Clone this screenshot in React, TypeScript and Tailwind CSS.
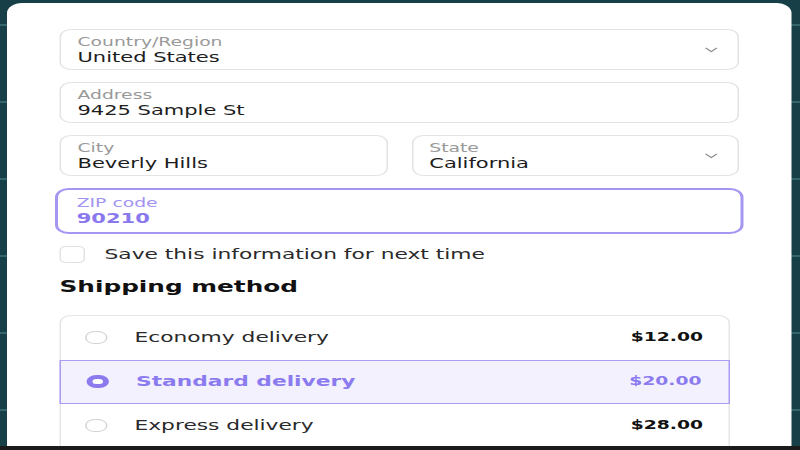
import { ReactNode } from "react";

const font = { fontFamily: '"DejaVu Sans", "Liberation Sans", sans-serif' };

function Chevron() {
    return (
        <svg width="9" height="6" viewBox="0 0 9 6" fill="none" className="shrink-0">
            <path d="M1 1.2 L4.5 4.6 L8 1.2" stroke="#8c8c8c" strokeWidth="1" strokeLinecap="round" strokeLinejoin="round" />
        </svg>
    );
}

function Field({ label, value, select }: { label: string; value: string; select?: boolean }) {
    return (
        <div className="h-[41px] rounded-[8px] border border-[#e3e3e3] pl-[11px] pr-[13px] flex items-center justify-between">
            <div className="flex flex-col">
                <span className="text-[12.5px] leading-[15px] text-[#999]">{label}</span>
                <span className="text-[14px] leading-[17px] text-[#1d1d1d]">{value}</span>
            </div>
            {select && <Chevron />}
        </div>
    );
}

function Radio({ on }: { on?: boolean }) {
    if (on) {
        return <div className="w-[15px] h-[13px] rounded-full border-[4px] border-[#8b7bef] bg-white shrink-0" />;
    }
    return <div className="w-[15px] h-[13px] rounded-full border border-[#d2d2d2] bg-white shrink-0" />;
}

function Rate({ name, price, on, children }: { name: string; price: string; on?: boolean; children?: ReactNode }) {
    return (
        <div
            className={
                on
                    ? "h-[44px] -mx-px flex items-center pl-[17px] pr-[18px] border border-[#a99df2] bg-[#f4f1ff]"
                    : "h-[44px] flex items-center pl-4 pr-[17px]"
            }
        >
            <Radio on={on} />
            <span className={on ? "ml-[18px] text-[14.5px] font-bold text-[#8b7bef]" : "ml-[18px] text-[14.5px] text-[#2a2a2a]"}>
                {name}
            </span>
            <span className={on ? "ml-auto text-[12.5px] font-bold text-[#8b7bef]" : "ml-auto text-[12.5px] font-bold text-[#111]"}>
                {price}
            </span>
            {children}
        </div>
    );
}

export default function App() {
    return (
        <div
            className="h-screen w-full flex flex-col overflow-hidden bg-[#173f47] bg-[repeating-linear-gradient(180deg,transparent_0px,transparent_24px,rgba(95,160,160,0.4)_24px,rgba(95,160,160,0.4)_26px,transparent_26px,transparent_77px)]"
            style={font}
        >
            <div className="flex-1 min-h-0 px-[7px] pt-[3px] overflow-hidden">
                {/* mobile checkout sheet, stretched to fill the landscape screen */}
                <div className="w-[523px] h-full origin-top-left scale-x-150 bg-white rounded-t-[10px] px-[35px] pt-[26px]">
                    <div className="flex flex-col gap-3">
                        <Field label="Country/Region" value="United States" select />
                        <Field label="Address" value="9425 Sample St" />
                        <div className="grid grid-cols-2 gap-4">
                            <Field label="City" value="Beverly Hills" />
                            <Field label="State" value="California" select />
                        </div>
                        <div className="-mx-[3px] h-[46px] rounded-[9px] border-2 border-[#a497f2] pl-[12.5px] flex flex-col justify-center">
                            <span className="text-[12.5px] leading-[15px] text-[#a294f0]">ZIP code</span>
                            <span className="text-[14px] leading-[17px] font-bold text-[#8a79ee]">90210</span>
                        </div>
                    </div>

                    <label className="mt-[10px] flex items-center">
                        <span className="w-[17px] h-[17px] rounded-[4px] border border-[#e3e3e3]" />
                        <span className="ml-[13px] text-[14.5px] text-[#2a2a2a]">Save this information for next time</span>
                    </label>

                    <div className="mt-[9px] text-[16.5px] font-bold text-[#111]">Shipping method</div>

                    <div className="mt-[15px] mr-[6px] rounded-t-[8px] border border-[#e6e6e6]">
                        <Rate name="Economy delivery" price="$12.00" />
                        <Rate name="Standard delivery" price="$20.00" on />
                        <Rate name="Express delivery" price="$28.00" />
                    </div>
                </div>
            </div>
            <div className="h-[4px] bg-[#1b1b1b]" />
        </div>
    );
}
